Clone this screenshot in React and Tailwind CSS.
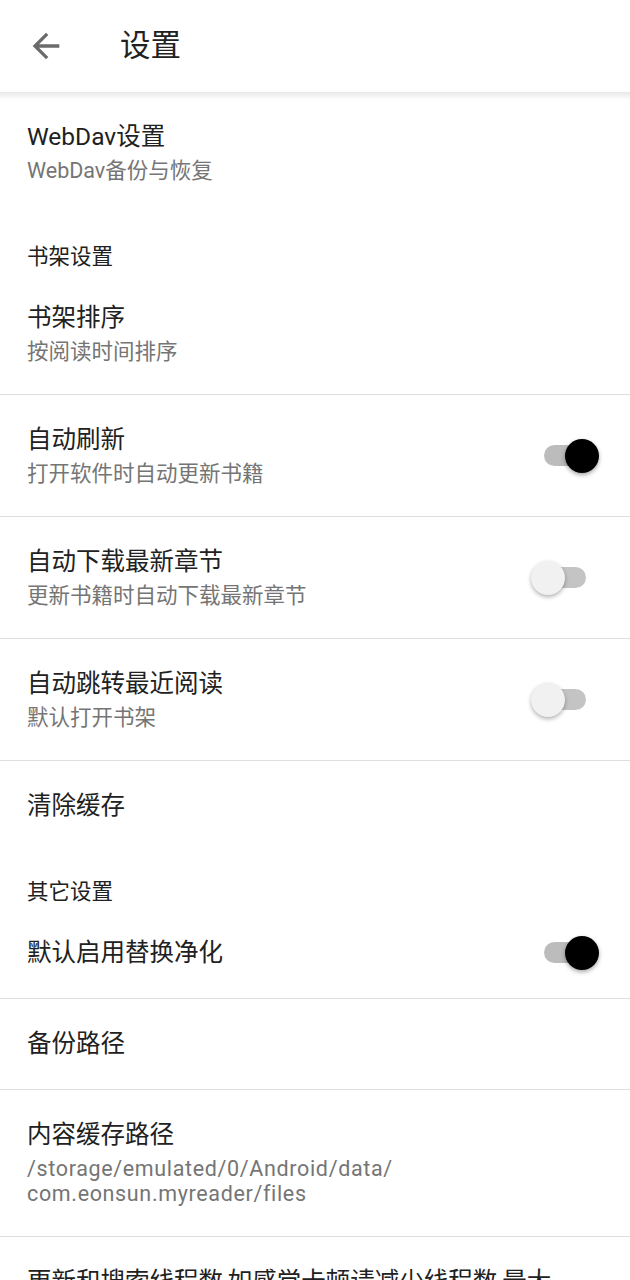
import React from "react";

const FONT = { fontFamily: "Roboto, 'Noto Sans CJK SC', sans-serif" };

function Toggle({ on }) {
  return (
    <div className="relative w-[68px] h-[34px] -my-[2px] shrink-0">
      <div
        className={`absolute left-[13px] top-[6px] w-[42px] h-[21px] rounded-full ${
          on ? "bg-[#bcbcbc]" : "bg-[#c4c4c4]"
        }`}
      />
      <div
        className={`absolute top-0 w-[34px] h-[34px] rounded-full ${
          on
            ? "left-[34px] bg-black shadow-[0_2px_4px_rgba(0,0,0,0.35)]"
            : "left-0 bg-[#f1f1f1] shadow-[0_2px_4px_rgba(0,0,0,0.3)]"
        }`}
      />
    </div>
  );
}

function Divider() {
  return <div className="h-px bg-[#dedede]" />;
}

function Row({ title, sub, toggle, subClass = "" }) {
  return (
    <div className="flex items-center pl-[27px] pr-[31px] py-[30px]">
      <div className="flex-1 min-w-0">
        <div className="text-[24.5px] leading-[30px] text-[#212121] whitespace-nowrap">{title}</div>
        {sub && (
          <div className={`mt-[6px] text-[21.5px] leading-[25px] text-[#757575] ${subClass}`}>
            {sub}
          </div>
        )}
      </div>
      {toggle !== undefined && <Toggle on={toggle} />}
    </div>
  );
}

function Section({ label, top }) {
  return (
    <div
      className={`pl-[27px] ${top} pb-[4px] text-[21.5px] leading-[24px] text-[#212121]`}
    >
      {label}
    </div>
  );
}

export default function App() {
  return (
    <div className="w-[630px] h-[1280px] overflow-hidden bg-white" style={FONT}>
      <div className="relative h-[92px] flex items-center bg-white z-10">
        <div className="w-[120px] pl-[26px] flex items-center">
          <svg width="40" height="40" viewBox="0 0 24 24">
            <path
              d="M20 11H7.83l5.59-5.59L12 4l-8 8 8 8 1.41-1.41L7.83 13H20v-2z"
              fill="#6b6b6b"
            />
          </svg>
        </div>
        <div className="text-[30.5px] leading-[40px] text-[#212121]">设置</div>
        <div className="absolute left-0 right-0 top-full h-[8px] bg-gradient-to-b from-[rgba(0,0,0,0.09)] to-transparent" />
      </div>

      <Row title="WebDav设置" sub="WebDav备份与恢复" />
      <Section label="书架设置" top="pt-[32px]" />
      <Row title="书架排序" sub="按阅读时间排序" />
      <Divider />
      <Row title="自动刷新" sub="打开软件时自动更新书籍" toggle={true} />
      <Divider />
      <Row title="自动下载最新章节" sub="更新书籍时自动下载最新章节" toggle={false} />
      <Divider />
      <Row title="自动跳转最近阅读" sub="默认打开书架" toggle={false} />
      <Divider />
      <Row title="清除缓存" />
      <Section label="其它设置" top="pt-[29px]" />
      <Row title="默认启用替换净化" toggle={true} />
      <Divider />
      <Row title="备份路径" />
      <Divider />
      <Row
        title="内容缓存路径"
        subClass="tracking-[0.65px]"
        sub={
          <>
            /storage/emulated/0/Android/data/
            <br />
            com.eonsun.myreader/files
          </>
        }
      />
      <Divider />
      <Row title="更新和搜索线程数,如感觉卡顿请减少线程数,最大" />
    </div>
  );
}
